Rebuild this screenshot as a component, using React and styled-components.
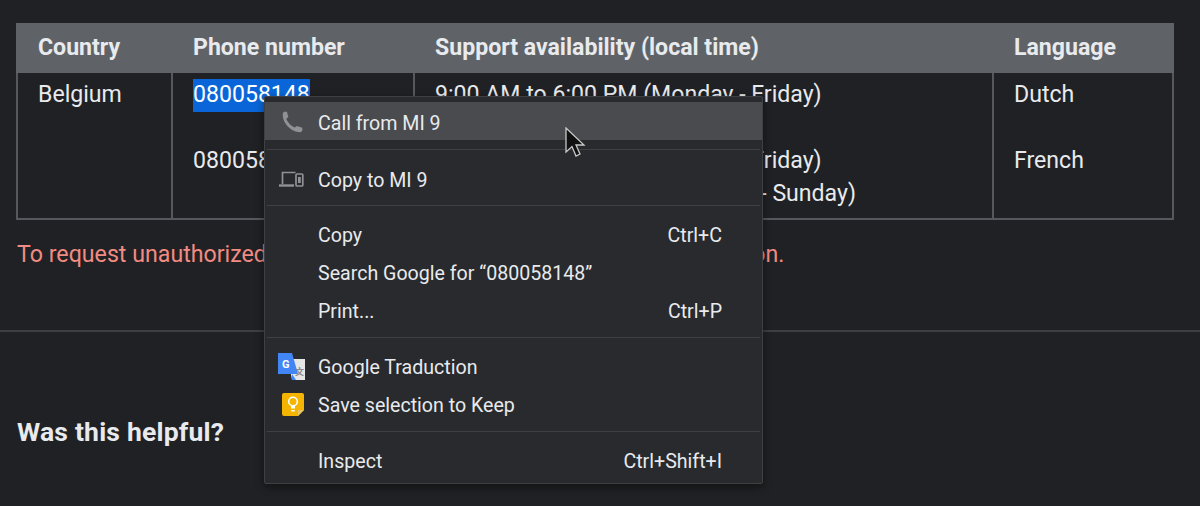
import React from "react";
import styled, { createGlobalStyle } from "styled-components";

const Global = createGlobalStyle`
  html, body { margin: 0; padding: 0; background: #202124; }
  body { font-family: Roboto, "Liberation Sans", sans-serif; color: #e8eaed; overflow: hidden; }
`;

const Page = styled.div`
  position: relative;
  width: 1200px;
  height: 506px;
  padding-top: 23px;
  box-sizing: border-box;
  overflow: hidden;
`;

const Table = styled.table`
  margin-left: 16px;
  width: 1156px;
  border-collapse: collapse;
  table-layout: fixed;
  font-size: 23.1px;
  line-height: 33px;
`;

const Col = styled.col`
  width: ${(p) => p.$w}px;
`;

const Th = styled.th`
  background: #5f6368;
  border: 2px solid #5f6368;
  padding: 6px 20px 7px;
  text-align: left;
  font-weight: 700;
  font-size: 23.1px;
  height: 33px;
  white-space: nowrap;
`;

const Td = styled.td`
  border: 2px solid #55585c;
  padding: 5px 20px 8px;
  vertical-align: top;
  white-space: nowrap;
  font-weight: 400;
`;

const Line = styled.div`
  margin-top: ${(p) => (p.$gap ? 33 : 0)}px;
`;

const Selected = styled.span`
  display: inline-block;
  line-height: 31px;
  padding-bottom: 2px;
  margin-bottom: -1px;
  background: #0a66d8;
  color: #fff;
`;

const Notice = styled.p`
  margin: 18px 0 0 17px;
  font-size: 23.2px;
  line-height: 33px;
  color: #f28b82;
  white-space: nowrap;
`;

const Divider = styled.hr`
  margin: 59px 0 0;
  border: 0;
  height: 2px;
  background: #3c4043;
`;

const Helpful = styled.h2`
  margin: 84px 0 0 17px;
  font-family: Roboto, "Liberation Sans", sans-serif;
  font-size: 26.5px;
  line-height: 32px;
  font-weight: 700;
  letter-spacing: 0.2px;
  color: #e8eaed;
`;

const Menu = styled.div`
  position: absolute;
  left: 264px;
  top: 96px;
  width: 499px;
  height: 388px;
  box-sizing: border-box;
  background: #292a2d;
  border: 1px solid #3f4043;
  border-radius: 2px;
  padding: 5px 0 0;
  box-shadow: 0 3px 8px rgba(0, 0, 0, 0.45);
  font-size: 19.6px;
`;

const Item = styled.div`
  display: flex;
  align-items: center;
  box-sizing: border-box;
  height: 38px;
  padding: 4px 40px 0 13px;
  background: ${(p) => (p.$active ? "#4a4b4e" : "transparent")};
  color: #e8eaed;
  white-space: nowrap;
`;

const IconSlot = styled.span`
  display: flex;
  align-items: center;
  justify-content: center;
  width: 26px;
  height: 26px;
  margin: -2px 14px 0 0;
  flex: none;
`;

const Label = styled.span`
  flex: 1;
`;

const Shortcut = styled.span`
  color: #e8eaed;
`;

const Sep = styled.div`
  height: 1px;
  margin: ${(p) => p.$top ?? 9}px 2px ${(p) => p.$bottom ?? 8}px;
  background: #3f4043;
`;

const Cursor = styled.svg`
  position: absolute;
  left: 565px;
  top: 127px;
`;

const KeepSvg = styled.svg`
  margin-left: 4px;
  flex: none;
`;

const WideSvg = styled.svg`
  flex: none;
`;

const PhoneIcon = () => (
  <WideSvg width="29" height="29" viewBox="0 0 24 24" fill="#8f9194">
    <path d="M6.3 3.2 8.2 3l1.2 4.4-1.700 1.500c.9 2.600 3.900 6 7 7.300l1.800-1.400 4.400 1.600.1 2.100c-.1.900-1 1.500-2 1.500C11.600 19.800 4.400 12.600 4.800 5c.1-1 .6-1.700 1.500-1.800z" />
  </WideSvg>
);

const DevicesIcon = () => (
  <WideSvg width="26" height="20" viewBox="0 0 26 20" fill="none" stroke="#8f9194" strokeWidth="1.7">
    <path d="M4.500 15V3.500h13" />
    <path d="M1 16.500h15" strokeWidth="2.400" />
    <rect x="18" y="5" width="6.800" height="12" rx="1" />
    <rect x="20" y="8" width="2.800" height="6" fill="#8f9194" stroke="none" />
  </WideSvg>
);

const TranslateIcon = () => (
  <WideSvg width="27" height="27" viewBox="0 0 27 27">
    <path d="M10 6h17v21H14z" fill="#e6e6e6" />
    <path d="M14 21l4 6h-4z" fill="#4285f4" />
    <path d="M0 0h14l6 21H0z" fill="#4285f4" />
    <text x="4" y="15" fontFamily="Roboto, sans-serif" fontSize="11" fontWeight="700" fill="#fff">G</text>
    <text x="17" y="22" fontFamily="Noto Sans CJK SC, sans-serif" fontSize="9" fontWeight="700" fill="#8a8a8a">文</text>
  </WideSvg>
);

const KeepIcon = () => (
  <KeepSvg width="22" height="23" viewBox="0 0 22 23">
    <path d="M2 0h18a2 2 0 0 1 2 2v15l-6 6H2a2 2 0 0 1-2-2V2a2 2 0 0 1 2-2z" fill="#f5b400" />
    <path d="M16 23v-6h6z" fill="#e6c36a" />
    <circle cx="11" cy="8.500" r="4.300" fill="none" stroke="#fff" strokeWidth="1.600" />
    <path d="M9 12.500h4v3H9zM9.300 17h3.400v1.500H9.300z" fill="#fff" />
  </KeepSvg>
);

export default function App() {
  return (
    <Page>
      <Global />
      <Table>
        <colgroup>
          <Col $w={155} />
          <Col $w={242} />
          <Col $w={579} />
          <Col $w={180} />
        </colgroup>
        <thead>
          <tr>
            <Th>Country</Th>
            <Th>Phone number</Th>
            <Th>Support availability (local time)</Th>
            <Th>Language</Th>
          </tr>
        </thead>
        <tbody>
          <tr>
            <Td><Line>Belgium</Line></Td>
            <Td>
              <Line><Selected>080058148</Selected></Line>
              <Line $gap>080058149</Line>
            </Td>
            <Td>
              <Line>9:00 AM to 6:00 PM (Monday - Friday)</Line>
              <Line $gap>9:00 AM to 6:00 PM (Monday - Friday)</Line>
              <Line>10:00 AM to 6:00 PM (Saturday - Sunday)</Line>
            </Td>
            <Td>
              <Line>Dutch</Line>
              <Line $gap>French</Line>
            </Td>
          </tr>
        </tbody>
      </Table>
      <Notice>To request unauthorized transaction information, see our contacts section.</Notice>
      <Divider />
      <Helpful>Was this helpful?</Helpful>

      <Menu>
        <Item $active>
          <IconSlot><PhoneIcon /></IconSlot>
          <Label>Call from MI 9</Label>
        </Item>
        <Sep $bottom={9} />
        <Item>
          <IconSlot><DevicesIcon /></IconSlot>
          <Label>Copy to MI 9</Label>
        </Item>
        <Sep $top={8} />
        <Item>
          <IconSlot />
          <Label>Copy</Label>
          <Shortcut>Ctrl+C</Shortcut>
        </Item>
        <Item>
          <IconSlot />
          <Label>Search Google for “080058148”</Label>
        </Item>
        <Item>
          <IconSlot />
          <Label>Print...</Label>
          <Shortcut>Ctrl+P</Shortcut>
        </Item>
        <Sep />
        <Item>
          <IconSlot><TranslateIcon /></IconSlot>
          <Label>Google Traduction</Label>
        </Item>
        <Item>
          <IconSlot><KeepIcon /></IconSlot>
          <Label>Save selection to Keep</Label>
        </Item>
        <Sep />
        <Item>
          <IconSlot />
          <Label>Inspect</Label>
          <Shortcut>Ctrl+Shift+I</Shortcut>
        </Item>
      </Menu>

      <Cursor width="22" height="32" viewBox="0 0 22 32">
        <path d="M1 1v24l6-5.500 4 9.500 4-2-4-9h8z" fill="#111" stroke="#c9c9c9" strokeWidth="1.300" />
      </Cursor>
    </Page>
  );
}
